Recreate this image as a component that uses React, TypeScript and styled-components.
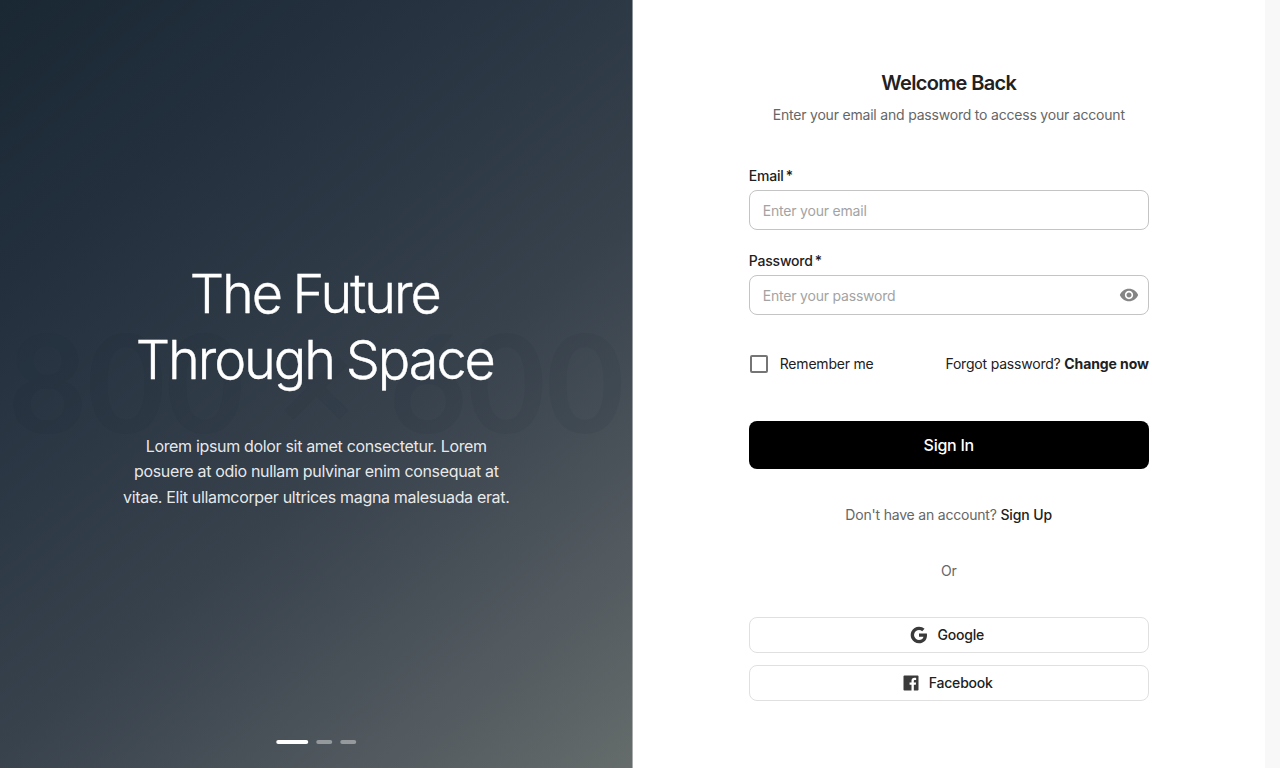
import React from "react";
import styled, { createGlobalStyle } from "styled-components";
import { MdVisibility } from "react-icons/md";
import { RiFacebookBoxFill, RiGoogleFill } from "react-icons/ri";

const GlobalStyle = createGlobalStyle`
  * { box-sizing: border-box; }
  body {
    margin: 0;
    background: #f8f8f8;
    color: #212121;
    font-family: Inter, "Liberation Sans", sans-serif;
    font-size: 14px;
    line-height: 22px;
    letter-spacing: -0.2px;
  }
`;

const Page = styled.main`
  display: grid;
  grid-template-columns: 1fr 1fr;
  width: 1265px;
  height: 768px;
  background: #fff;
`;

const Hero = styled.section`
  position: relative;
  display: flex;
  flex-direction: column;
  align-items: center;
  justify-content: center;
  gap: 40px;
  padding-top: 3px;
  overflow: hidden;
  color: #fff;
  text-align: center;
  background: linear-gradient(
    140deg,
    #1a2833 0%,
    #232f3d 22%,
    #2d3945 41%,
    #38424d 58%,
    #444d55 70%,
    #52595f 82%,
    #656c6b 100%
  );
  box-shadow: inset -1px 0 rgba(255, 255, 255, 0.45);
`;

const Watermark = styled.div`
  position: absolute;
  inset: 0 0 6px;
  display: flex;
  align-items: center;
  justify-content: center;
  font: 700 135.5px/1 Lato, sans-serif;
  letter-spacing: 0;
  white-space: nowrap;
  color: rgba(20, 34, 46, 0.08);
`;

const HeroTitle = styled.h1`
  position: relative;
  margin: 0;
  padding-right: 3px;
  font-size: 54px;
  font-weight: 300;
  line-height: 66.6px;
  letter-spacing: -2.05px;
  word-spacing: -1.5px;
  -webkit-text-stroke: 0.4px #fff;
`;

const HeroText = styled.p`
  position: relative;
  width: 400px;
  margin: 0;
  font-size: 16px;
  line-height: 25.6px;
  letter-spacing: -0.33px;
  color: rgba(255, 255, 255, 0.9);
`;

const Pager = styled.div`
  position: absolute;
  right: 0;
  bottom: 24px;
  left: 0;
  display: flex;
  justify-content: center;
  gap: 8px;
  transform: translateX(0.25px);
`;

const Dash = styled.span<{ $active?: boolean }>`
  width: ${(p) => (p.$active ? 32 : 16)}px;
  height: 4px;
  border-radius: 2px;
  background: ${(p) => (p.$active ? "#fff" : "rgba(255, 255, 255, 0.4)")};
`;

const FormSide = styled.section`
  display: flex;
  align-items: center;
  justify-content: center;
`;

const Form = styled.form`
  display: flex;
  flex-direction: column;
  width: 400px;
`;

const Header = styled.header`
  margin-bottom: 39px;
  text-align: center;
`;

const Title = styled.h2`
  margin: 0 0 5px;
  font-size: 20px;
  font-weight: 600;
  line-height: 32px;
  letter-spacing: -0.65px;
`;

const Muted = styled.p`
  margin: 0;
  color: #666;
`;

const Field = styled.label`
  display: flex;
  flex-direction: column;
  margin-bottom: 20px;
`;

const Label = styled.span`
  display: flex;
  gap: 2px;
  height: 25px;
  font-weight: 500;
`;

const InputBox = styled.span`
  display: flex;
  align-items: center;
  height: 40px;
  padding: 0 9px 0 13px;
  border: 1px solid #c4c4c4;
  border-radius: 8px;
  color: #858585;
`;

const Input = styled.input`
  flex: 1;
  min-width: 0;
  padding: 2px 0 0;
  border: 0;
  outline: 0;
  background: none;
  font: inherit;
  letter-spacing: inherit;
  &::placeholder { color: #a3a3a3; opacity: 1; }
`;

const Options = styled.div`
  display: flex;
  align-items: center;
  justify-content: space-between;
  margin: 18px 0 46px;
`;

const Remember = styled.label`
  display: flex;
  align-items: center;
  gap: 12px;
  padding-left: 1px;
`;

const Checkbox = styled.input`
  appearance: none;
  width: 18px;
  height: 18px;
  margin: 0;
  border: 2px solid #757575;
  border-radius: 2px;
`;

const Link = styled.a<{ $weight: number }>`
  color: #212121;
  font-weight: ${(p) => p.$weight};
  letter-spacing: -0.1px;
`;

const SubmitButton = styled.button`
  height: 48px;
  margin-bottom: 35px;
  border: 0;
  border-radius: 8px;
  background: #000;
  color: #fff;
  font: 500 16px/24px Inter, sans-serif;
  letter-spacing: -0.25px;
`;

const CenterLine = styled(Muted)<{ $gap: number }>`
  margin-bottom: ${(p) => p.$gap}px;
  text-align: center;
`;

const SocialList = styled.div`
  display: flex;
  flex-direction: column;
  gap: 12px;
`;

const SocialButton = styled.button`
  display: flex;
  align-items: center;
  justify-content: center;
  gap: 8px;
  height: 36px;
  padding: 0 4px 0 0;
  border: 1px solid #e0e0e0;
  border-radius: 8px;
  background: #fff;
  color: #212121;
  font: 500 14px/22px Inter, sans-serif;
  letter-spacing: -0.2px;
  svg { color: #3a3a3a; }
`;

export default function App() {
  return (
    <>
      <GlobalStyle />
      <Page>
        <Hero>
          <Watermark aria-hidden>800 × 600</Watermark>
          <HeroTitle>
            The Future
            <br />
            Through Space
          </HeroTitle>
          <HeroText>
            Lorem ipsum dolor sit amet consectetur. Lorem posuere at odio nullam pulvinar enim
            consequat at vitae. Elit ullamcorper ultrices magna malesuada erat.
          </HeroText>
          <Pager>
            <Dash $active />
            <Dash />
            <Dash />
          </Pager>
        </Hero>
        <FormSide>
          <Form>
            <Header>
              <Title>Welcome Back</Title>
              <Muted>Enter your email and password to access your account</Muted>
            </Header>
            <Field>
              <Label>Email<span>*</span></Label>
              <InputBox>
                <Input type="email" placeholder="Enter your email" />
              </InputBox>
            </Field>
            <Field>
              <Label>Password<span>*</span></Label>
              <InputBox>
                <Input type="password" placeholder="Enter your password" />
                <MdVisibility size={20} />
              </InputBox>
            </Field>
            <Options>
              <Remember>
                <Checkbox type="checkbox" />
                Remember me
              </Remember>
              <span>
                Forgot password? <Link $weight={700}>Change now</Link>
              </span>
            </Options>
            <SubmitButton type="button">Sign In</SubmitButton>
            <CenterLine $gap={34}>
              Don't have an account? <Link $weight={500}>Sign Up</Link>
            </CenterLine>
            <CenterLine $gap={35}>Or</CenterLine>
            <SocialList>
              <SocialButton type="button">
                <RiGoogleFill size={20} />
                Google
              </SocialButton>
              <SocialButton type="button">
                <RiFacebookBoxFill size={20} />
                Facebook
              </SocialButton>
            </SocialList>
          </Form>
        </FormSide>
      </Page>
    </>
  );
}
